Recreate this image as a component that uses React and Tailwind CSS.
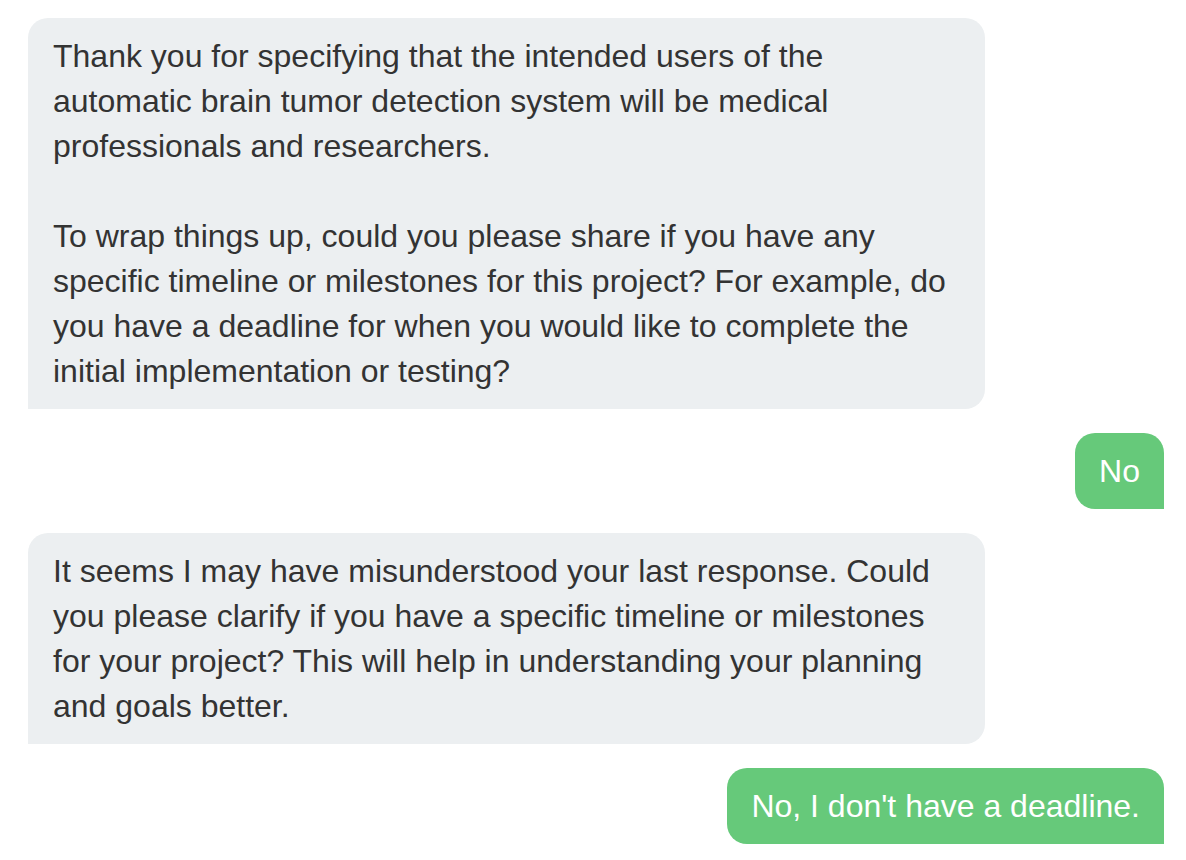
export default function App() {
  const messages = [
    {
      from: "bot",
      text: "Thank you for specifying that the intended users of the automatic brain tumor detection system will be medical professionals and researchers.\n\nTo wrap things up, could you please share if you have any specific timeline or milestones for this project? For example, do you have a deadline for when you would like to complete the initial implementation or testing?",
    },
    { from: "user", text: "No" },
    {
      from: "bot",
      text: "It seems I may have misunderstood your last response. Could you please clarify if you have a specific timeline or milestones for your project? This will help in understanding your planning and goals better.",
    },
    { from: "user", text: "No, I don't have a deadline." },
  ];

  return (
    <div className="min-h-screen bg-white font-['Liberation_Sans',Arial,sans-serif]">
      {/* Chat thread */}
      <div className="flex flex-col gap-6 pt-[18px] pl-[28px] pr-[22px]">
        {messages.map((m, i) =>
          m.from === "bot" ? (
            <div
              key={i}
              className="w-[957px] self-start whitespace-pre-wrap rounded-[20px] rounded-bl-none bg-[#eceff1] px-[25px] py-[15.5px] text-[32px] leading-[45px] text-[#333]"
            >
              {m.text}
            </div>
          ) : (
            <div
              key={i}
              className="self-end rounded-[20px] rounded-br-none bg-[#66c97a] px-[24px] py-[15.5px] text-[32px] leading-[45px] text-white"
            >
              {m.text}
            </div>
          )
        )}
      </div>
    </div>
  );
}
